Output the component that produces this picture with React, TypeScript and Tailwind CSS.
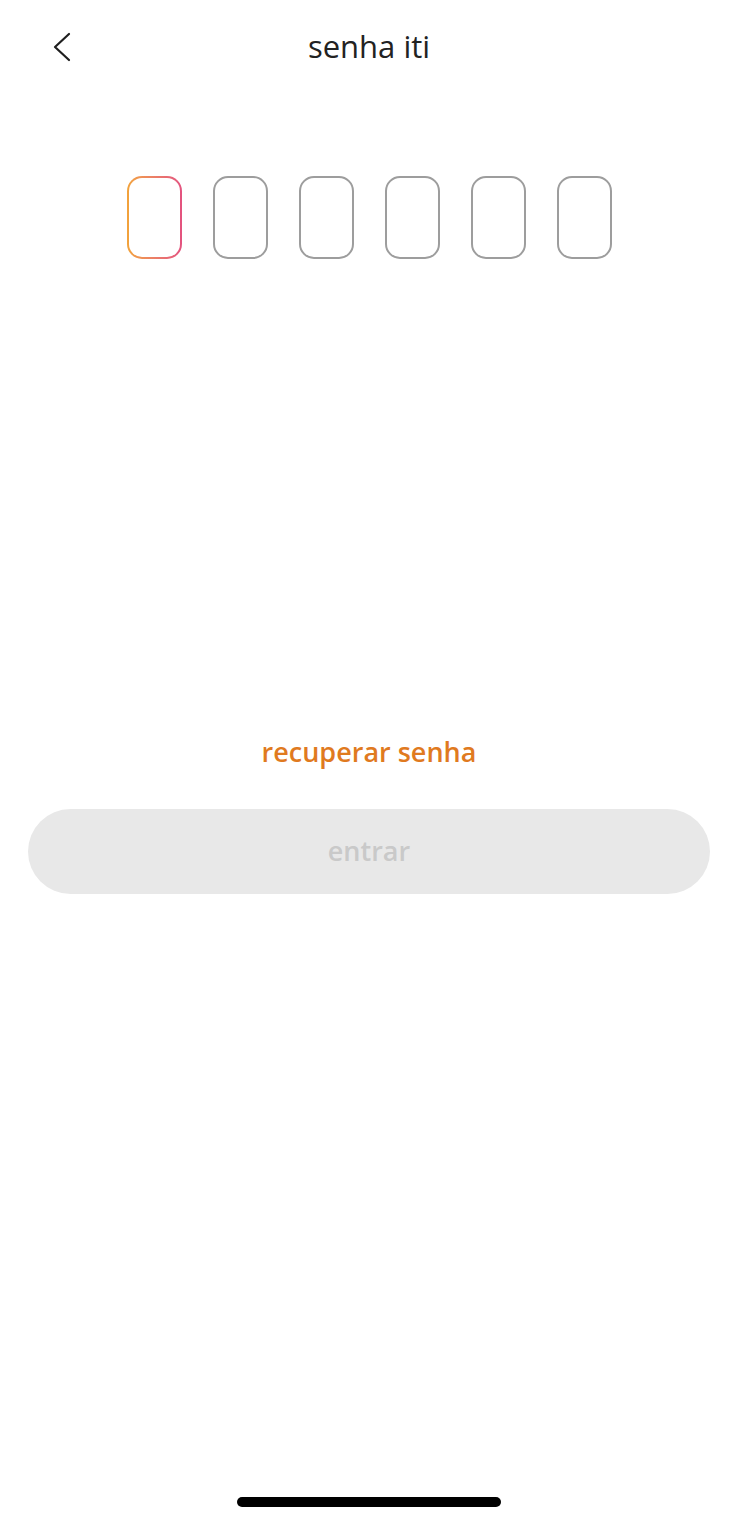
import { FC } from 'react';

const DIGITS = 6;

const BackChevron: FC = () => (
  <svg width="18" height="30" viewBox="0 0 18 30" fill="none">
    <polyline
      points="16,2 2,15 16,28"
      stroke="#1f1f1f"
      strokeWidth="2.2"
      strokeLinecap="round"
      strokeLinejoin="round"
    />
  </svg>
);

const PinBox: FC<{ active?: boolean }> = ({ active }) => {
  if (active) {
    return (
      <div className="w-[55px] h-[83px] rounded-[15px] p-[2px] bg-linear-to-r from-[#f2a33a] to-[#e3527f]">
        <div className="w-full h-full rounded-[13px] bg-white" />
      </div>
    );
  }
  return <div className="w-[55px] h-[83px] rounded-[15px] border-2 border-[#9d9d9d] bg-white" />;
};

const App: FC = () => {
  return (
    <div
      className="min-h-[1521px] w-full bg-white flex flex-col pl-[3px]"
      style={{ fontFamily: '"Open Sans", "Noto Sans", sans-serif' }}
    >
      <header className="h-[92px] grid grid-cols-[1fr_auto_1fr] items-center">
        <button type="button" className="justify-self-start ml-[50px] mt-[1px]">
          <BackChevron />
        </button>
        <h1 className="text-[31px] leading-none text-[#222222] font-normal">senha iti</h1>
        <div />
      </header>

      <div className="mt-[84px] flex justify-center gap-[31px]">
        {Array.from({ length: DIGITS }).map((_, i) => (
          <PinBox key={i} active={i === 0} />
        ))}
      </div>

      <div className="mt-[475px] text-center">
        <span className="text-[27px] leading-[36px] font-semibold text-[#e07a1f]">recuperar senha</span>
      </div>

      <div className="mt-[39px] mx-[25px]">
        <button
          type="button"
          disabled
          className="w-full h-[85px] rounded-full bg-[#e8e8e8] text-[27px] font-semibold text-[#c9c9c9]"
        >
          entrar
        </button>
      </div>

      <div className="mt-auto mb-[14px] flex justify-center">
        <div className="w-[264px] h-[10px] rounded-full bg-black" />
      </div>
    </div>
  );
};

export default App;
